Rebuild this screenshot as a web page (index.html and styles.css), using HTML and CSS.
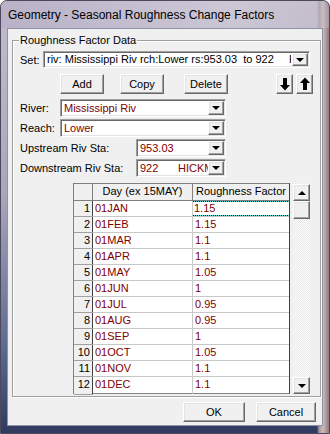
FILE: index.html
```html
<!DOCTYPE html>
<html lang="en">
<head>
    <meta charset="UTF-8" />
    <title>Geometry - Seasonal Roughness Change Factors</title>
    <link rel="stylesheet" href="styles.css">
</head>
<body>
    <div class="window">
        <div class="titlebar">Geometry - Seasonal Roughness Change Factors</div>
        <div class="client">
            <div class="group">
                <span class="legend">Roughness Factor Data</span>

                <div class="row row-set">
                    <label class="lbl lbl-set">Set:</label>
                    <div class="combo combo-set">
                        <span class="combo-text">riv: Mississippi Riv rch:Lower rs:953.03&nbsp; to 922</span>
                        <span class="clip-h">H</span>
                        <span class="drop"><i></i></span>
                    </div>
                </div>

                <div class="row row-buttons">
                    <button class="btn btn-add">Add</button>
                    <button class="btn btn-copy">Copy</button>
                    <button class="btn btn-delete">Delete</button>
                    <button class="btn btn-arrow btn-down">
                        <svg width="10" height="14" viewBox="0 0 10 14"><path d="M3 1h4v7h3l-5 5.5L0 8h3z" fill="#000"/></svg>
                    </button>
                    <button class="btn btn-arrow btn-up">
                        <svg width="10" height="14" viewBox="0 0 10 14"><path d="M3 13h4V6h3L5 0.5 0 6h3z" fill="#000"/></svg>
                    </button>
                </div>

                <div class="row row-field row-first">
                    <label class="lbl lbl-short">River:</label>
                    <div class="combo combo-wide">
                        <span class="combo-text data">Mississippi Riv</span>
                        <span class="drop"><i></i></span>
                    </div>
                </div>
                <div class="row row-field">
                    <label class="lbl lbl-short">Reach:</label>
                    <div class="combo combo-wide">
                        <span class="combo-text data">Lower</span>
                        <span class="drop"><i></i></span>
                    </div>
                </div>
                <div class="row row-field">
                    <label class="lbl lbl-long">Upstream Riv Sta:</label>
                    <div class="combo combo-narrow">
                        <span class="combo-text data">953.03</span>
                        <span class="drop"><i></i></span>
                    </div>
                </div>
                <div class="row row-field">
                    <label class="lbl lbl-long">Downstream Riv Sta:</label>
                    <div class="combo combo-narrow">
                        <span class="combo-text data"><span class="sta">922</span>HICKMAN</span>
                        <span class="drop"><i></i></span>
                    </div>
                </div>

                <div class="grid-wrap">
                    <div class="grid">
                        <div class="grid-row grid-head">
                            <div class="cell num"></div>
                            <div class="cell day">Day (ex 15MAY)</div>
                            <div class="cell factor">Roughness Factor</div>
                        </div>
                        <div class="grid-row"><div class="cell num">1</div><div class="cell day">01JAN</div><div class="cell factor"><span class="focus">1.15</span></div></div>
                        <div class="grid-row"><div class="cell num">2</div><div class="cell day">01FEB</div><div class="cell factor">1.15</div></div>
                        <div class="grid-row"><div class="cell num">3</div><div class="cell day">01MAR</div><div class="cell factor">1.1</div></div>
                        <div class="grid-row"><div class="cell num">4</div><div class="cell day">01APR</div><div class="cell factor">1.1</div></div>
                        <div class="grid-row"><div class="cell num">5</div><div class="cell day">01MAY</div><div class="cell factor">1.05</div></div>
                        <div class="grid-row"><div class="cell num">6</div><div class="cell day">01JUN</div><div class="cell factor">1</div></div>
                        <div class="grid-row"><div class="cell num">7</div><div class="cell day">01JUL</div><div class="cell factor">0.95</div></div>
                        <div class="grid-row"><div class="cell num">8</div><div class="cell day">01AUG</div><div class="cell factor">0.95</div></div>
                        <div class="grid-row"><div class="cell num">9</div><div class="cell day">01SEP</div><div class="cell factor">1</div></div>
                        <div class="grid-row"><div class="cell num">10</div><div class="cell day">01OCT</div><div class="cell factor">1.05</div></div>
                        <div class="grid-row"><div class="cell num">11</div><div class="cell day">01NOV</div><div class="cell factor">1.1</div></div>
                        <div class="grid-row grid-last"><div class="cell num">12</div><div class="cell day">01DEC</div><div class="cell factor">1.1</div></div>
                    </div>
                    <div class="scrollbar">
                        <span class="sb-btn"><i class="up"></i></span>
                        <span class="sb-thumb"></span>
                        <span class="sb-track"></span>
                        <span class="sb-btn"><i></i></span>
                    </div>
                </div>
            </div>

            <div class="footer">
                <button class="btn btn-ok">OK</button>
                <button class="btn btn-cancel">Cancel</button>
            </div>
        </div>
    </div>
</body>
</html>
```

FILE: styles.css
```css
body {
    margin: 0;
    background: #fff;
    font-family: 'Liberation Sans', Arial, sans-serif;
    font-size: 11px;
    color: #000;
}
.window {
    width: 330px;
    height: 434px;
    box-sizing: border-box;
    border-radius: 7px 7px 0 0;
    border: 1px solid #4a4a5c;
    background:
        linear-gradient(to right, transparent 316px, #a89494 318px, #cbbcbc 322px, #8e7a80 328px),
        linear-gradient(to bottom, #c3bdcc 0%, #aaa5bb 45%, #5d6a90 80%, #2f3a5e 100%);
    display: flex;
    flex-direction: column;
}
.titlebar {
    height: 27px;
    line-height: 29px;
    padding-left: 7px;
    font-size: 12px;
    color: #000;
    white-space: nowrap;
    background: linear-gradient(to right, rgba(180,172,198,0.6), rgba(214,210,222,0.5) 70%, rgba(196,190,206,0.4));
    border-radius: 7px 7px 0 0;
}
.client {
    margin: 0 6px;
    height: 398px;
    box-sizing: border-box;
    border: 1px solid #8d93a6;
    background: #f0f0f0;
    display: flex;
    flex-direction: column;
}
.group {
    position: relative;
    margin: 11px 1px 0 4px;
    height: 357px;
    box-sizing: border-box;
    padding: 10px 0 2px 0;
    border: 1px solid #a0a0a0;
    box-shadow: 1px 1px 0 #fff, inset 1px 1px 0 #fff;
}
.legend {
    position: absolute;
    left: 6px;
    top: -8px;
    padding: 0 1px;
    background: #f0f0f0;
    line-height: 15px;
}
.row {
    display: flex;
    align-items: center;
}
.row-set {
    height: 17px;
}
.lbl {
    margin-left: 7px;
    white-space: nowrap;
}
.lbl-set { width: 23px; }
.lbl-short { width: 40px; }
.lbl-long { width: 116px; }

.combo {
    height: 100%;
    box-sizing: border-box;
    display: flex;
    align-items: stretch;
    background: #fff;
    border: 1px solid;
    border-color: #a0a0a0 #fff #fff #a0a0a0;
    box-shadow: inset 1px 1px 0 #696969, inset -1px -1px 0 #e3e3e3;
    padding: 1px;
    overflow: hidden;
}
.combo-set { width: 267px; }
.combo-wide { width: 166px; }
.combo-narrow { width: 90px; }
.combo-text {
    flex: 1;
    padding-left: 2px;
    white-space: pre;
    overflow: hidden;
    line-height: 14px;
}
.combo-set .combo-text { line-height: 13px; }
.data { color: #800000; }
.sta {
    display: inline-block;
    width: 38px;
}
.clip-h {
    width: 2px;
    overflow: hidden;
    margin-right: 1px;
    color: #000;
    line-height: 13px;
}
.drop {
    width: 16px;
    box-sizing: border-box;
    background: #f0f0f0;
    border: 1px solid;
    border-color: #fff #696969 #696969 #fff;
    box-shadow: inset -1px -1px 0 #a0a0a0, inset 1px 1px 0 #e3e3e3;
    display: flex;
    align-items: center;
    justify-content: center;
}
.drop i, .sb-btn i {
    width: 0;
    height: 0;
    border-left: 4px solid transparent;
    border-right: 4px solid transparent;
    border-top: 4px solid #000;
}
.sb-btn i.up {
    border-top: 0;
    border-bottom: 4px solid #000;
}

.btn {
    box-sizing: border-box;
    height: 20px;
    padding: 0;
    font-family: 'Liberation Sans', Arial, sans-serif;
    font-size: 11px;
    color: #000;
    background: #f0f0f0;
    border: 1px solid;
    border-color: #fff #696969 #696969 #fff;
    box-shadow: inset -1px -1px 0 #a0a0a0, inset 1px 1px 0 #e3e3e3;
}
.row-buttons {
    margin-top: 6px;
    height: 20px;
}
.btn-add { width: 44px; margin-left: 47px; }
.btn-copy { width: 44px; margin-left: 16px; }
.btn-delete { width: 44px; margin-left: 20px; }
.btn-arrow {
    width: 17px;
    display: flex;
    align-items: center;
    justify-content: center;
}
.btn-down { margin-left: 48px; }
.btn-up { margin-left: 3px; }

.row-field {
    height: 18px;
    margin-top: 2px;
}
.row-first { margin-top: 5px; }

.grid-wrap {
    display: flex;
    margin: 6px 0 0 60px;
    height: 211px;
}
.grid {
    width: 217px;
    box-sizing: border-box;
    border: 1px solid #808080;
    border-right-color: #404040;
    background: #fff;
}
.grid-row {
    display: flex;
    height: 16px;
    box-sizing: border-box;
    border-bottom: 1px solid #c8c8c8;
    color: #800000;
}
.grid-head {
    height: 17px;
    background: #f0f0f0;
    color: #000;
    border-bottom-color: #808080;
}
.grid-last { border-bottom: 0; height: 17px; }
.cell {
    box-sizing: border-box;
    line-height: 15px;
    white-space: nowrap;
    overflow: hidden;
}
.num {
    width: 19px;
    background: #f0f0f0;
    color: #000;
    text-align: right;
    padding-right: 2px;
    border-right: 1px solid #404040;
    box-shadow: 0 1px 0 #a0a0a0;
}
.day {
    width: 100px;
    padding-left: 2px;
    border-right: 1px solid #c8c8c8;
}
.factor {
    width: 96px;
    padding-left: 2px;
}
.grid-head .num { border-right-color: #808080; box-shadow: none; }
.grid-head .day,
.grid-head .factor {
    text-align: center;
    padding-left: 0;
    border-right: 1px solid #808080;
}
.grid-head .factor { border-right: 0; }
.focus {
    display: block;
    margin: 0 -1px 0 -3px;
    padding-left: 2px;
    height: 15px;
    box-sizing: border-box;
    outline: 1px dotted #000;
    outline-offset: -1px;
    box-shadow: inset 0 0 0 1px #40e0e0;
    line-height: 14px;
}

.scrollbar {
    width: 17px;
    margin-left: 3px;
    display: flex;
    flex-direction: column;
    padding-top: 1px;
    box-sizing: border-box;
    background: repeating-conic-gradient(#fff 0 25%, #e6e6e6 0 50%) 0 0 / 2px 2px;
}
.sb-btn, .sb-thumb {
    height: 17px;
    box-sizing: border-box;
    background: #f0f0f0;
    border: 1px solid;
    border-color: #fff #696969 #696969 #fff;
    box-shadow: inset -1px -1px 0 #a0a0a0, inset 1px 1px 0 #e3e3e3;
    display: flex;
    align-items: center;
    justify-content: center;
}
.sb-thumb { height: 18px; }
.sb-track { flex: 1; }

.footer {
    display: flex;
    justify-content: flex-end;
    margin: 5px 6px 0 0;
}
.btn-ok { width: 62px; margin-right: 11px; }
.btn-cancel { width: 60px; }
```
